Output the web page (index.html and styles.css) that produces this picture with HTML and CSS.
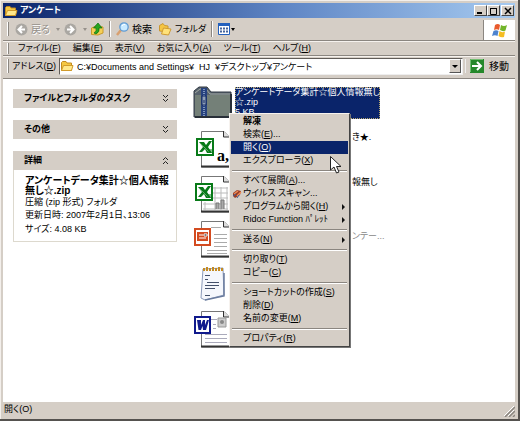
FILE: index.html
```html
<!DOCTYPE html>
<html lang="ja">
<head>
<meta charset="utf-8">
<title>アンケート</title>
<link rel="stylesheet" href="styles.css">
</head>
<body>
<svg class="defs" aria-hidden="true">
  <defs>
    <g id="folder">
      <path d="M.5 10.500V2.500L1.500 1.500H5L6 3H10.500V10.500Z" fill="#f5c842" stroke="#c28b20"/>
      <path d="M.5 10.500L2.500 5.500H12L10.500 10.500Z" fill="#ffe88c" stroke="#d19b2c"/>
    </g>
    <g id="page">
      <path d="M.5 .5H23L28.500 6V36H.5Z" fill="#fff" stroke="#777"/>
      <path d="M22.500 0V6H29" fill="#ddd" stroke="#333"/>
      <path d="M0 35.500H30" stroke="#333" stroke-width="2"/>
    </g>
    <g id="excel">
      <path d="M1 1H17V17H1Z" fill="#fff" stroke="#087a18" stroke-width="2"/>
      <path d="M3 4H8L10 7L13 3H16L12 9L16 15H11L9 11L6 14H3L7 9Z" fill="#087a18"/>
      <path d="M4 5L13 14" stroke="#61a866"/>
      <path d="M12 12H16M12 14H16" stroke="#087a18"/>
    </g>
  </defs>
</svg>
<main class="window">
  <header class="titlebar">
    <svg width="13" height="12" aria-hidden="true"><use href="#folder"/></svg>
    <h1>アンケート</h1>
    <div class="winbtns">
      <button type="button" aria-label="最小化"><svg width="9" height="7"><path d="M1 6H6" stroke="#000" stroke-width="2"/></svg></button>
      <button type="button" aria-label="最大化"><svg width="9" height="8"><path d="M1 1.500H8M1.500 1V7.500H7.500V1" fill="none" stroke="#000"/></svg></button>
      <button type="button" class="close" aria-label="閉じる"><svg width="8" height="8"><path d="M1 1L7 7M7 1L1 7" stroke="#000" stroke-width="1.500"/></svg></button>
    </div>
  </header>

  <div class="toprow">
    <nav class="toolbar">
      <i class="grip"></i>
      <button type="button" class="off back"><svg width="13" height="13"><circle cx="6.500" cy="6.500" r="6" fill="#aaa7a2"/><path d="M7 3L3.500 6.500L7 10M4 6.500H10" fill="none" stroke="#fff" stroke-width="2"/></svg>戻る<i class="arrow"></i></button>
      <button type="button" class="off fwd" aria-label="進む"><svg width="13" height="13"><circle cx="6.500" cy="6.500" r="6" fill="#aaa7a2"/><path d="M6 3L9.500 6.500L6 10M9 6.500H3" fill="none" stroke="#fff" stroke-width="2"/></svg><i class="arrow"></i></button>
      <button type="button" class="up" aria-label="上へ"><svg width="13" height="14"><path d="M.5 12.500V6L5 4L12 5V11L7 13Z" fill="#f5cf56" stroke="#c89a2a"/><path d="M5 12Q9 10 8 6H11L7 1L2.500 6H5Q6 9 3 11Z" fill="#27a51f" stroke="#087010" stroke-width=".7"/></svg></button>
      <i class="divider"></i>
      <button type="button" class="search"><svg width="13" height="14"><path d="M1 13L5 8" stroke="#d8a070" stroke-width="2.500"/><circle cx="8" cy="5" r="4.200" fill="#c9eaff" stroke="#619bd2" stroke-width="1.300"/><path d="M6 4Q7 2 9 2.500" fill="none" stroke="#fff"/></svg>検索</button>
      <button type="button" class="folders"><svg width="13" height="13"><path d="M.5 8V2.500L4 .5L5.500 2.500L9 3V9Z" fill="#f5c542" stroke="#ca9830"/><path d="M2.500 11L4.500 5L12 6L9.500 12Z" fill="#ffe27a" stroke="#d09b33"/></svg>フォルダ</button>
      <i class="divider"></i>
      <button type="button" class="views" aria-label="表示形式"><svg width="12" height="12"><path d="M.5 .5H11.500V11.500H.5Z" fill="#fff" stroke="#2461bd"/><path d="M0 1.500H12" stroke="#2461bd" stroke-width="3"/><path d="M2 5.500H10M2 8.500H10" stroke="#45649c" stroke-width="2" stroke-dasharray="2 1"/></svg><i class="arrow"></i></button>
    </nav>
    <div class="brand">
      <svg width="16" height="15" aria-hidden="true"><path d="M3 2Q6 0 8 2L7 7Q5 5.500 2 7Z" fill="#e95b2d"/><path d="M9 2Q12 4 15 2L13.500 7.500Q11 9 8 7Z" fill="#72b52b"/><path d="M1.500 8Q4 6.500 6.500 8L5.500 13Q3 11.500 0 13Z" fill="#4d83cf"/><path d="M7.500 8Q10 10 13 8.500L12 14Q9 15 6.500 13Z" fill="#f5bd22"/></svg>
    </div>
  </div>

  <nav class="menubar">
    <i class="grip"></i>
    <button type="button">ファイル(<u>F</u>)</button>
    <button type="button">編集(<u>E</u>)</button>
    <button type="button">表示(<u>V</u>)</button>
    <button type="button">お気に入り(<u>A</u>)</button>
    <button type="button">ツール(<u>T</u>)</button>
    <button type="button">ヘルプ(<u>H</u>)</button>
  </nav>

  <form class="address">
    <i class="grip"></i>
    <label for="path">アドレス(<u>D</u>)</label>
    <div class="field">
      <svg width="13" height="12" aria-hidden="true"><use href="#folder"/></svg>
      <input id="path" type="text" value="C:¥Documents and Settings¥  HJ  ¥デスクトップ¥アンケート">
      <button type="button" class="drop" aria-label="履歴"><i class="arrow"></i></button>
    </div>
    <button type="button" class="go"><svg width="14" height="14"><path d="M0 0H14V14H0Z" fill="#25882a"/><path d="M.5 13V.5H13" fill="none" stroke="#71bd70"/><path d="M2 7H10M7 3L11 7L7 11" fill="none" stroke="#fff" stroke-width="2"/></svg>移動</button>
  </form>

  <section class="content">
    <aside class="tasks">
      <section class="panel"><h2>ファイルとフォルダのタスク<svg width="7" height="7"><path d="M1 0L3.500 2.500L6 0M1 4L3.500 6.500L6 4" fill="none" stroke="#222"/></svg></h2></section>
      <section class="panel"><h2>その他<svg width="7" height="7"><path d="M1 0L3.500 2.500L6 0M1 4L3.500 6.500L6 4" fill="none" stroke="#222"/></svg></h2></section>
      <section class="panel">
        <h2>詳細<svg width="7" height="7"><path d="M1 3L3.500 .5L6 3M1 7L3.500 4.500L6 7" fill="none" stroke="#222"/></svg></h2>
        <div class="details">
          <strong>アンケートデータ集計☆個人情報<br>無し☆.zip</strong>
          <p class="kind">圧縮 (zip 形式) フォルダ</p>
          <p>更新日時: 2007年2月1日、13:06</p>
          <p>サイズ: 4.08 KB</p>
        </div>
      </section>
    </aside>

    <ul class="files">
      <li class="selected">
        <svg width="40" height="32" aria-hidden="true"><path d="M1 31V5L6 1H14L18 6H38V31Z" fill="#58636e" stroke="#303942"/><path d="M2 30V9H37V30Z" fill="#748078"/><path d="M2 7L7 3H13L17 8H37" fill="none" stroke="#a5aca4"/><path d="M11 2V31" stroke="#27427f" stroke-width="6"/><path d="M11 3V31" stroke="#8097bd" stroke-width="2" stroke-dasharray="1 1"/><path d="M9 10H13V19H9Z" fill="#8fa0b8" stroke="#152b65"/><path d="M11 14V17" stroke="#152b65"/><path d="M38 8V31H2" fill="none" stroke="#282f38" stroke-width="2"/></svg>
        <span class="name">アンケートデータ集計☆個人情報無し<br>☆.zip<br>5 KB</span>
      </li>
      <li>
        <svg width="40" height="38" aria-hidden="true"><use href="#page" x="8" y="0"/><use href="#excel" x="3" y="7"/><text x="24" y="30" class="glyph">a,</text></svg>
        <span class="tail">き★.</span>
      </li>
      <li>
        <svg width="40" height="38" aria-hidden="true"><use href="#page" x="8" y="0"/><path d="M20 12H35M20 17H35M20 22H35M10 28H35M10 33H35M22 11V34M28 11V34M34 11V34M12 26V34" stroke="#bbb"/><path d="M23 33V27H26V33M28 33V24H31V33" fill="#aaa" stroke="#777"/><use href="#excel" x="2" y="7"/></svg>
        <span class="tail">報無し</span>
      </li>
      <li>
        <svg width="40" height="38" aria-hidden="true"><use href="#page" x="8" y="0"/><path d="M18 6.500H28M21 13.500H34M21 17.500H34M21 21.500H34M21 25.500H34M14 29.500H34M14 32.500H34" stroke="#aaa"/><path d="M2 8H17V24H2Z" fill="#fff" stroke="#d34b20" stroke-width="2"/><path d="M4 11H15V20H4Z" fill="#d34b20"/><path d="M6 14H10M6 17H13M11 13H14V15H11Z" stroke="#fff"/></svg>
        <span class="tail faded">ンテー...</span>
      </li>
      <li>
        <svg width="40" height="38" aria-hidden="true"><path d="M10 3L30 2L31 29L12 34L8 32Z" fill="#f5f7fc" stroke="#8c9bba"/><path d="M31 7V30L12 34" fill="none" stroke="#697b9d" stroke-width="1.500"/><path d="M11 5V2M14 5V1M17 5V2M20 5V1M23 5V2M26 5V1M29 5V2" stroke="#c48b22" stroke-width="2"/><path d="M12 9.500H17M12 13.500H15M12 19.500H26M14 16.500H26M12 22.500H22M12 29.500H17" stroke="#43506a"/></svg>
      </li>
      <li>
        <svg width="40" height="38" aria-hidden="true"><use href="#page" x="8" y="0"/><path d="M18 8.500H24M20 13.500H23M20 17.500H23M12 23.500H34M12 27.500H34M12 31.500H34" stroke="#aab"/><path d="M25 7H33V16H25Z" fill="#ccc" stroke="#999"/><circle cx="29" cy="11" r="2" fill="#888"/><path d="M2 6H17V22H2Z" fill="#fff" stroke="#101a8c" stroke-width="2"/><path d="M4 9H8L8 14L10 9H12V14L14 9H16L13 19H10L9.500 15L8 19H5.500Z" fill="#101a8c"/></svg>
      </li>
    </ul>

    <div class="context" role="menu">
      <button type="button" role="menuitem"><b>解凍</b></button>
      <button type="button" role="menuitem">検索(<u>E</u>)...</button>
      <button type="button" role="menuitem" class="active">開く(<u>O</u>)</button>
      <button type="button" role="menuitem">エクスプローラ(<u>X</u>)</button>
      <hr>
      <button type="button" role="menuitem">すべて展開(<u>A</u>)...</button>
      <button type="button" role="menuitem" class="scan"><svg width="10" height="10"><path d="M1 4L5 1L9 2L8 6L3 9L1 7Z" fill="#963c28"/><path d="M2 5L6 2M5 7L9 3" stroke="#f08b54" stroke-width="1.500"/><path d="M1 7L4 5M5 9L7 6" stroke="#435f96"/></svg>ウイルス スキャン...</button>
      <button type="button" role="menuitem" class="sub">プログラムから開く(<u>H</u>)</button>
      <button type="button" role="menuitem" class="sub">Ridoc Function ﾊﾟﾚｯﾄ</button>
      <hr>
      <button type="button" role="menuitem" class="sub">送る(<u>N</u>)</button>
      <hr>
      <button type="button" role="menuitem">切り取り(<u>T</u>)</button>
      <button type="button" role="menuitem">コピー(<u>C</u>)</button>
      <hr>
      <button type="button" role="menuitem">ショートカットの作成(<u>S</u>)</button>
      <button type="button" role="menuitem">削除(<u>D</u>)</button>
      <button type="button" role="menuitem">名前の変更(<u>M</u>)</button>
      <hr>
      <button type="button" role="menuitem">プロパティ(<u>R</u>)</button>
      <svg class="cursor" width="12" height="19" aria-hidden="true"><path d="M.5 .5V14L4 11L6.500 17L9 16L6.500 10.500H11Z" fill="#fff" stroke="#222"/></svg>
    </div>
  </section>

  <footer class="status">
    <span>開く(O)</span>
    <svg width="11" height="11" aria-hidden="true"><path d="M1 11L11 1M5 11L11 5M9 11L11 9" stroke="#8b8680" stroke-width="1.500"/><path d="M0 10L10 0M4 10L10 4" stroke="#fff"/></svg>
  </footer>
</main>
</body>
</html>
```

FILE: styles.css
```css
:root {
  --face: #d5cec6;
  --shade: #8b8680;
  --navy: #0a246a;
}

* { box-sizing: border-box; }

body {
  margin: 0;
  font: 9px/13px "Liberation Sans", "Noto Sans CJK JP", sans-serif;
  font-feature-settings: "palt";
  color: #000;
}

button, input {
  font: inherit;
  font-feature-settings: inherit;
  color: inherit;
  border: 0;
  padding: 0;
  margin: 0;
  background: none;
  white-space: nowrap;
}

h1, h2, p, ul { margin: 0; padding: 0; }
svg { display: block; flex: none; }
.defs { position: absolute; width: 0; height: 0; }
u { text-underline-offset: 1px; }

.window {
  display: flex;
  flex-direction: column;
  min-height: 100vh;
  padding: 3px 3px 2px;
  background: var(--face);
  border-right: 2px solid #55524f;
  border-bottom: 2px solid #55524f;
  box-shadow: inset 1px 1px #f3efeb;
}

.titlebar {
  display: flex;
  align-items: center;
  gap: 2px;
  height: 15px;
  padding: 0 1px 0 2px;
  background: linear-gradient(90deg, #0a246a, #5f86c5 55%, #a6caf0);
}
.titlebar h1 { flex: 1; font-size: 9px; color: #fff; }
.winbtns { display: flex; }
.winbtns button {
  display: grid;
  place-items: center;
  width: 13px;
  height: 11px;
  background: var(--face);
  border: 1px solid #fff;
  border-right-color: #444;
  border-bottom-color: #444;
}
.winbtns .close { margin-left: 1px; }

.toprow {
  display: flex;
  height: 23px;
  border-bottom: 1px solid var(--shade);
}
.toolbar, .toolbar button, .menubar, .address, .field, .go {
  display: flex;
  align-items: center;
}
.toolbar { flex: 1; padding-left: 4px; }
.toolbar button { gap: 3px; height: 20px; font-size: 10px; }
.toolbar .search { margin-right: 7px; }
.toolbar .folders { margin-right: 5px; font-size: 9px; }
.toolbar .up { margin-right: 5px; }
.off { color: #96918b; text-shadow: 1px 1px #fff; }
.arrow {
  border: 2px solid transparent;
  border-top: 3px solid currentColor;
  border-bottom: 0;
}
.off .arrow { margin: 0 4px 0 3px; }
.views .arrow { margin-left: -2px; }
.divider {
  width: 2px;
  height: 16px;
  margin-right: 5px;
  border-left: 1px solid var(--shade);
  border-right: 1px solid #fff;
}
.grip {
  width: 2px;
  height: 14px;
  border-left: 1px solid #fff;
  border-right: 1px solid var(--shade);
}
.toolbar .grip { margin-right: 6px; }
.brand {
  display: grid;
  place-items: center;
  width: 32px;
  margin-top: 2px;
  background: #fff;
  border-left: 1px solid var(--shade);
}

.menubar {
  gap: 12px;
  height: 15px;
  padding-left: 4px;
  border-bottom: 1px solid var(--shade);
  box-shadow: inset 0 1px #f6f2ee;
}
.menubar .grip { height: 11px; }
.menubar .grip { margin-right: -3px; }

.address {
  height: 20px;
  padding: 0 6px 0 4px;
  box-shadow: inset 0 1px #f6f2ee;
}
.address label { margin: 0 3px; white-space: nowrap; }
.field {
  flex: 1;
  height: 17px;
  gap: 2px;
  padding: 1px;
  background: #fff;
  border: 1px solid #605c58;
  border-right-color: #eee;
  border-bottom-color: #eee;
}
.field input { flex: 1; min-width: 0; height: 14px; padding-left: 1px; outline: 0; }
.drop {
  display: grid;
  place-items: center;
  width: 12px;
  height: 14px;
  background: var(--face);
  border: 1px solid #fff;
  border-right-color: #555;
  border-bottom-color: #555;
}
.drop .arrow { border-width: 3px 3px 0; }
.go { gap: 5px; margin-left: 2px; padding-left: 4px; border-left: 1px solid #eee; }
.address .go { font-size: 10px; }

.content {
  position: relative;
  display: flex;
  flex: 1;
  gap: 16px;
  margin-top: 2px;
  padding: 7px 0 8px 10px;
  background: #fff;
  border-top: 1px solid var(--shade);
}

.tasks {
  display: flex;
  flex-direction: column;
  gap: 12px;
  flex: 0 0 164px;
  padding-top: 3px;
}
.panel h2 {
  display: flex;
  justify-content: space-between;
  align-items: center;
  height: 19px;
  padding: 0 8px 0 11px;
  font-size: 9px;
  background: var(--face);
}
.details {
  padding: 6px 0 5px 11px;
  border: 1px solid #ddd9ce;
  border-top: 0;
  white-space: nowrap;
}
.details strong { display: block; font-size: 10px; line-height: 10px; }
.details p { line-height: 14px; }
.details .kind { line-height: 12px; }

.files { flex: 1; list-style: none; }
.files li { display: flex; height: 45px; gap: 2px; }
.name {
  align-self: flex-start;
  height: 32px;
  margin-top: 1px;
  line-height: 10px;
  color: #fff;
  background: var(--navy);
  outline: 1px dotted #b5a66e;
  outline-offset: -1px;
  white-space: nowrap;
}
.tail { padding-left: 117px; }
.faded { padding-top: 9px; color: #888; }
.glyph { font: bold 16px "Liberation Serif", serif; }

.context {
  position: absolute;
  top: 34px;
  left: 226px;
  width: 121px;
  padding: 1px;
  background: var(--face);
  border: 1px solid #f6f2ee;
  border-right-color: #444;
  border-bottom-color: #444;
  box-shadow: 1px 1px #777;
}
.context button {
  display: flex;
  align-items: center;
  width: 100%;
  height: 13px;
  padding-left: 12px;
}
.context .active { color: #fff; background: var(--navy); }
.context .scan { padding-left: 1px; gap: 1px; }
.context .sub::after {
  content: "";
  margin: 0 3px 0 auto;
  border: 3px solid transparent;
  border-left-color: #111;
  border-right: 0;
}
.context hr {
  height: 2px;
  margin: 3px 1px 2px;
  border: 0;
  border-top: 1px solid var(--shade);
  border-bottom: 1px solid #fff;
}
.cursor { position: absolute; top: 42px; left: 100px; }

.status {
  display: flex;
  justify-content: space-between;
  align-items: center;
  height: 15px;
  padding-left: 1px;
}
.status svg { align-self: flex-end; }
```
